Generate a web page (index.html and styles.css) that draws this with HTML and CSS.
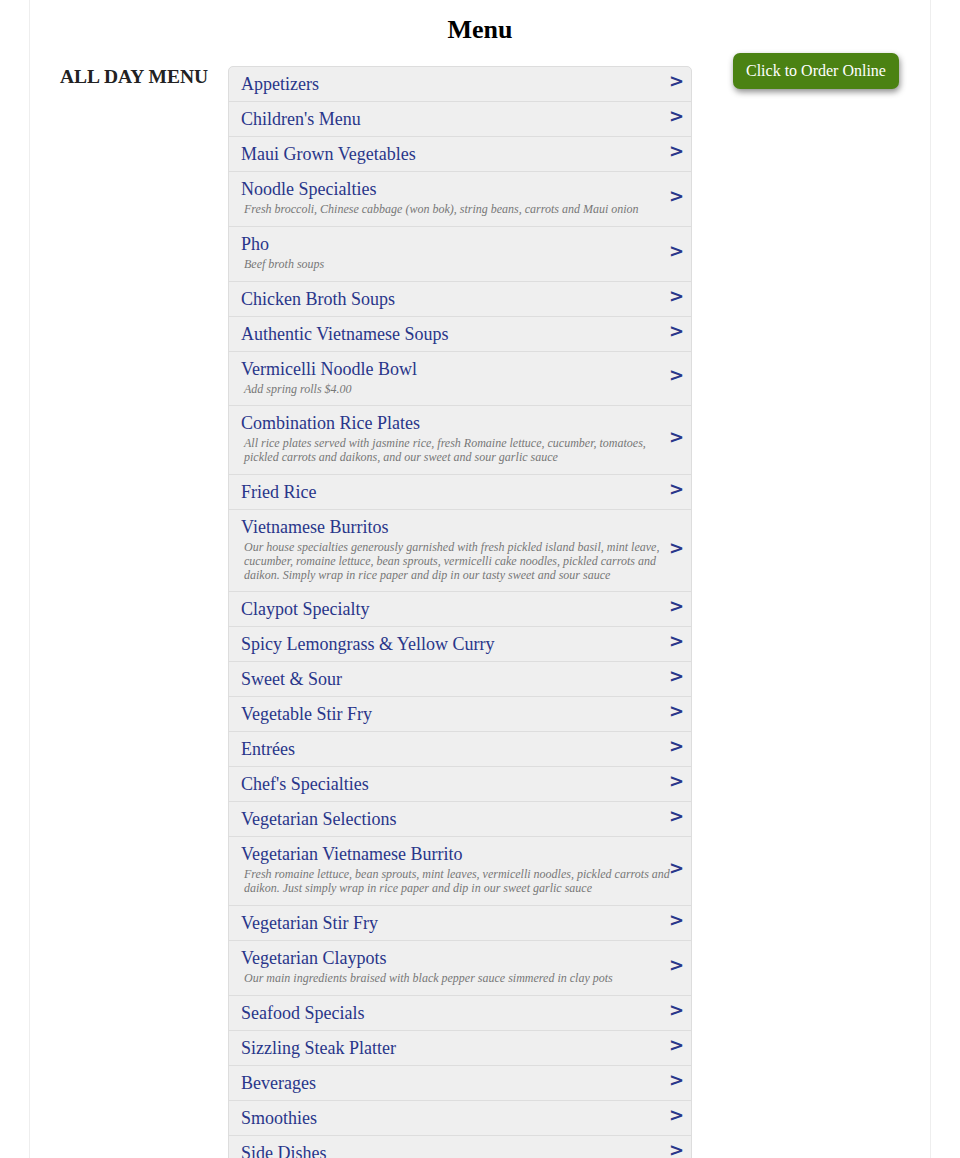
FILE: index.html
```html
<!DOCTYPE html>
<html lang="en">
<head>
<meta charset="utf-8">
<title>Menu</title>
<link rel="stylesheet" href="styles.css">
</head>
<body>
<div class="page">
  <h1 class="title">Menu</h1>
  <div class="layout">
    <h2 class="label">ALL DAY MENU</h2>
    <ul class="menu">
      <li class="item"><div class="text"><div class="name">Appetizers</div></div><span class="arrow">&gt;</span></li>
      <li class="item"><div class="text"><div class="name">Children's Menu</div></div><span class="arrow">&gt;</span></li>
      <li class="item"><div class="text"><div class="name">Maui Grown Vegetables</div></div><span class="arrow">&gt;</span></li>
      <li class="item"><div class="text"><div class="name">Noodle Specialties</div><div class="desc">Fresh broccoli, Chinese cabbage (won bok), string beans, carrots and Maui onion</div></div><span class="arrow">&gt;</span></li>
      <li class="item"><div class="text"><div class="name">Pho</div><div class="desc">Beef broth soups</div></div><span class="arrow">&gt;</span></li>
      <li class="item"><div class="text"><div class="name">Chicken Broth Soups</div></div><span class="arrow">&gt;</span></li>
      <li class="item"><div class="text"><div class="name">Authentic Vietnamese Soups</div></div><span class="arrow">&gt;</span></li>
      <li class="item"><div class="text"><div class="name">Vermicelli Noodle Bowl</div><div class="desc">Add spring rolls $4.00</div></div><span class="arrow">&gt;</span></li>
      <li class="item"><div class="text"><div class="name">Combination Rice Plates</div><div class="desc">All rice plates served with jasmine rice, fresh Romaine lettuce, cucumber, tomatoes, pickled carrots and daikons, and our sweet and sour garlic sauce</div></div><span class="arrow">&gt;</span></li>
      <li class="item"><div class="text"><div class="name">Fried Rice</div></div><span class="arrow">&gt;</span></li>
      <li class="item"><div class="text"><div class="name">Vietnamese Burritos</div><div class="desc">Our house specialties generously garnished with fresh pickled island basil, mint leave, cucumber, romaine lettuce, bean sprouts, vermicelli cake noodles, pickled carrots and daikon. Simply wrap in rice paper and dip in our tasty sweet and sour sauce</div></div><span class="arrow">&gt;</span></li>
      <li class="item"><div class="text"><div class="name">Claypot Specialty</div></div><span class="arrow">&gt;</span></li>
      <li class="item"><div class="text"><div class="name">Spicy Lemongrass &amp; Yellow Curry</div></div><span class="arrow">&gt;</span></li>
      <li class="item"><div class="text"><div class="name">Sweet &amp; Sour</div></div><span class="arrow">&gt;</span></li>
      <li class="item"><div class="text"><div class="name">Vegetable Stir Fry</div></div><span class="arrow">&gt;</span></li>
      <li class="item"><div class="text"><div class="name">Entrées</div></div><span class="arrow">&gt;</span></li>
      <li class="item"><div class="text"><div class="name">Chef's Specialties</div></div><span class="arrow">&gt;</span></li>
      <li class="item"><div class="text"><div class="name">Vegetarian Selections</div></div><span class="arrow">&gt;</span></li>
      <li class="item"><div class="text"><div class="name">Vegetarian Vietnamese Burrito</div><div class="desc">Fresh romaine lettuce, bean sprouts, mint leaves, vermicelli noodles, pickled carrots and daikon. Just simply wrap in rice paper and dip in our sweet garlic sauce</div></div><span class="arrow">&gt;</span></li>
      <li class="item"><div class="text"><div class="name">Vegetarian Stir Fry</div></div><span class="arrow">&gt;</span></li>
      <li class="item"><div class="text"><div class="name">Vegetarian Claypots</div><div class="desc">Our main ingredients braised with black pepper sauce simmered in clay pots</div></div><span class="arrow">&gt;</span></li>
      <li class="item"><div class="text"><div class="name">Seafood Specials</div></div><span class="arrow">&gt;</span></li>
      <li class="item"><div class="text"><div class="name">Sizzling Steak Platter</div></div><span class="arrow">&gt;</span></li>
      <li class="item"><div class="text"><div class="name">Beverages</div></div><span class="arrow">&gt;</span></li>
      <li class="item"><div class="text"><div class="name">Smoothies</div></div><span class="arrow">&gt;</span></li>
      <li class="item"><div class="text"><div class="name">Side Dishes</div></div><span class="arrow">&gt;</span></li>
    </ul>
    <div class="side">
      <a class="order" href="#">Click to Order Online</a>
    </div>
  </div>
</div>
</body>
</html>
```

FILE: styles.css
```css
html, body {
  margin: 0;
  padding: 0;
  background: #ffffff;
}

body {
  font-family: "Liberation Serif", "Times New Roman", serif;
  color: #222222;
}

.page {
  width: 900px;
  margin: 0 auto;
  padding-top: 15px;
  border-left: 1px solid #eeeeee;
  border-right: 1px solid #eeeeee;
  min-height: 1300px;
}

.title {
  margin: 0;
  font-size: 26px;
  line-height: 30px;
  font-weight: bold;
  text-align: center;
  color: #000000;
}

.layout {
  display: grid;
  grid-template-columns: 168px 464px 1fr;
  align-items: start;
  margin-top: 21px;
  padding-left: 30px;
}

.label {
  margin: 0;
  font-size: 19.5px;
  line-height: 22px;
  font-weight: bold;
  color: #222222;
}

.menu {
  list-style: none;
  margin: 0;
  padding: 0;
  background: #efefef;
  border: 1px solid #dddddd;
  border-radius: 5px 5px 0 0;
}

.item {
  display: flex;
  align-items: center;
  padding: 7px 10px 7px 12px;
  border-top: 1px solid #dddddd;
}

.item:first-child {
  border-top: none;
}

.text {
  flex: 1;
  min-width: 0;
}

.name {
  font-size: 18px;
  line-height: 20px;
  color: #29368a;
}

.desc {
  margin: 4px 0 2px;
  padding-left: 3px;
  font-size: 12px;
  line-height: 13.8px;
  font-style: italic;
  color: #777777;
}

.arrow {
  flex: 0 0 12px;
  width: 12px;
  margin-left: -2px;
  font-family: "DejaVu Sans", sans-serif;
  font-weight: bold;
  font-size: 18px;
  line-height: 14px;
  padding-bottom: 6px;
  color: #29368a;
}

.side {
  display: flex;
  align-items: flex-start;
  margin-top: -13px;
  padding-left: 41px;
}

.order {
  display: block;
  padding: 9px 13px;
  font-size: 16px;
  line-height: 18px;
  color: #ffffff;
  text-decoration: none;
  background: #4b8213;
  border-radius: 7px;
  box-shadow: 1px 3px 6px rgba(0, 0, 0, 0.45);
}
```
